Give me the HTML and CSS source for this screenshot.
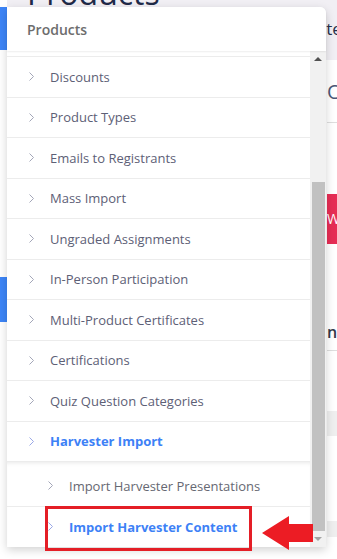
FILE: index.html
```html
<!DOCTYPE html>
<html lang="en">
<head>
<meta charset="utf-8">
<title>Products menu</title>
<link rel="stylesheet" href="styles.css">
</head>
<body>
<div class="bg">
  <div class="side">
    <div class="side-bar first"></div>
    <div class="side-bar second"></div>
  </div>
  <div class="main">
    <div class="main-head">
      <h1 class="title">Products</h1>
      <span class="head-right">ite</span>
    </div>
    <div class="main-body">
      <div class="bg-order">Order</div>
      <div class="bg-rule"></div>
      <div class="bg-btn">Wait</div>
      <div class="bg-strong">nt</div>
      <div class="bg-rule second"></div>
      <div class="bg-gray"></div>
      <div class="bg-gray second"></div>
    </div>
  </div>
</div>

<div class="panel">
  <div class="panel-head">Products</div>
  <div class="panel-body">
    <div class="list">
      <div class="list-top"></div>
      <div class="item"><svg class="chev" viewBox="0 0 5 9"><polyline points="0.5,0.5 4.5,4.5 0.5,8.5"/></svg><span>Discounts</span></div>
      <div class="item"><svg class="chev" viewBox="0 0 5 9"><polyline points="0.5,0.5 4.5,4.5 0.5,8.5"/></svg><span>Product Types</span></div>
      <div class="item"><svg class="chev" viewBox="0 0 5 9"><polyline points="0.5,0.5 4.5,4.5 0.5,8.5"/></svg><span>Emails to Registrants</span></div>
      <div class="item"><svg class="chev" viewBox="0 0 5 9"><polyline points="0.5,0.5 4.5,4.5 0.5,8.5"/></svg><span>Mass Import</span></div>
      <div class="item"><svg class="chev" viewBox="0 0 5 9"><polyline points="0.5,0.5 4.5,4.5 0.5,8.5"/></svg><span>Ungraded Assignments</span></div>
      <div class="item"><svg class="chev" viewBox="0 0 5 9"><polyline points="0.5,0.5 4.5,4.5 0.5,8.5"/></svg><span>In-Person Participation</span></div>
      <div class="item"><svg class="chev" viewBox="0 0 5 9"><polyline points="0.5,0.5 4.5,4.5 0.5,8.5"/></svg><span>Multi-Product Certificates</span></div>
      <div class="item"><svg class="chev" viewBox="0 0 5 9"><polyline points="0.5,0.5 4.5,4.5 0.5,8.5"/></svg><span>Certifications</span></div>
      <div class="item"><svg class="chev" viewBox="0 0 5 9"><polyline points="0.5,0.5 4.5,4.5 0.5,8.5"/></svg><span>Quiz Question Categories</span></div>
      <div class="item active"><svg class="chev" viewBox="0 0 5 9"><polyline points="0.5,0.5 4.5,4.5 0.5,8.5"/></svg><span>Harvester Import</span></div>
      <div class="sub">
        <div class="item sub-item"><svg class="chev" viewBox="0 0 5 9"><polyline points="0.5,0.5 4.5,4.5 0.5,8.5"/></svg><span>Import Harvester Presentations</span></div>
        <div class="item sub-item active last"><svg class="chev" viewBox="0 0 5 9"><polyline points="0.5,0.5 4.5,4.5 0.5,8.5"/></svg><span>Import Harvester Content</span></div>
      </div>
    </div>
    <div class="sb">
      <div class="sb-btn"><span class="tri up"></span></div>
      <div class="sb-track"><div class="sb-thumb"></div></div>
      <div class="sb-btn"><span class="tri down"></span></div>
    </div>
  </div>
</div>

<div class="highlight"></div>
<svg class="arrow" viewBox="0 0 51 34"><polygon points="0,17 27,0 27,8 51,8 51,26 27,26 27,34"/></svg>
</body>
</html>
```

FILE: styles.css
```css
* { box-sizing: border-box; }
html, body { margin: 0; padding: 0; }
body {
  width: 337px;
  height: 559px;
  overflow: hidden;
  background: #ffffff;
  font-family: "Open Sans", "Liberation Sans", sans-serif;
  position: relative;
}

/* background page */
.bg {
  display: grid;
  grid-template-columns: 7px 1fr;
  height: 559px;
}
.side { display: flex; flex-direction: column; }
.side-bar { background: #3d85f7; width: 7px; }
.side-bar.first { margin-top: 7px; height: 43px; }
.side-bar.second { margin-top: 227px; height: 45px; }

.main-head {
  height: 60px;
  background: #f1eff4;
  display: flex;
  align-items: flex-start;
  white-space: nowrap;
}
.title {
  margin: -23px 0 0 20px;
  width: 295px;
  font-size: 32px;
  line-height: 32px;
  font-weight: 400;
  color: #1f2a48;
}
.head-right {
  margin-top: 19px;
  font-size: 17px;
  line-height: 20px;
  color: #27304a;
}
.main-body {
  padding-left: 320px;
  display: flex;
  flex-direction: column;
  white-space: nowrap;
}
.bg-order {
  margin-top: 20px;
  font-size: 20px;
  line-height: 24px;
  color: #4c5877;
}
.bg-rule { margin-top: 18px; height: 1px; background: #dedede; }
.bg-rule.second { margin-top: 8px; }
.bg-btn {
  margin-top: 71px;
  height: 50px;
  background: #e62d55;
  color: #ffffff;
  font-size: 14px;
  line-height: 50px;
  padding-left: 0;
}
.bg-strong {
  margin-top: 78px;
  font-size: 16px;
  font-weight: 600;
  line-height: 20px;
  color: #333a4a;
}
.bg-gray { margin-top: 60px; height: 25px; background: #efefef; }
.bg-gray.second { margin-top: 85px; height: 16px; }

/* dropdown panel */
.panel {
  position: absolute;
  left: 7px;
  top: 7px;
  width: 319px;
  height: 540px;
  background: #ffffff;
  border-radius: 0 6px 0 0;
  box-shadow: 0 3px 10px rgba(0, 0, 0, 0.18);
  display: flex;
  flex-direction: column;
}
.panel-head {
  height: 44px;
  flex: 0 0 44px;
  padding-left: 20px;
  display: flex;
  align-items: center;
  font-size: 14px;
  font-weight: 600;
  color: #6d6d6d;
  box-shadow: 0 1px 2px rgba(0, 0, 0, 0.07);
  position: relative;
  z-index: 1;
  border-radius: 0 6px 0 0;
  background: #ffffff;
}
.panel-body {
  flex: 1;
  display: flex;
  min-height: 0;
}
.list {
  flex: 1;
  overflow: hidden;
}
.list-top { height: 6px; border-bottom: 1px solid #ececec; }
.item {
  height: 40.5px;
  border-bottom: 1px solid #ececec;
  display: flex;
  align-items: center;
  padding-left: 22px;
  font-size: 13px;
  color: #5d6076;
  white-space: nowrap;
}
.chev {
  width: 5px;
  height: 9px;
  margin-right: 16px;
  flex: 0 0 auto;
}
.chev polyline {
  fill: none;
  stroke: #a3a6b8;
  stroke-width: 1;
}
.item.active { color: #3d81f6; font-weight: 700; }
.item.active .chev polyline { stroke: #9aa8e6; }
.sub {
  padding-top: 4px;
  box-shadow: inset 0 4px 4px -3px rgba(0, 0, 0, 0.09);
}
.sub-item { padding-left: 41px; color: #666872; }
.item.last { border-bottom: none; }

/* scrollbar */
.sb {
  width: 16px;
  flex: 0 0 16px;
  background: #f1f1f1;
  display: flex;
  flex-direction: column;
}
.sb-btn {
  height: 16px;
  flex: 0 0 16px;
  display: flex;
  align-items: center;
  justify-content: center;
}
.tri { width: 0; height: 0; border-left: 4px solid transparent; border-right: 4px solid transparent; }
.tri.up { border-bottom: 4px solid #505050; }
.tri.down { border-top: 4px solid #a3a3a3; }
.sb-track {
  flex: 1;
  display: flex;
  flex-direction: column;
  justify-content: flex-end;
  padding: 0 1px 0 2px;
}
.sb-thumb { height: 349px; background: #c1c1c1; }

/* annotation */
.highlight {
  position: absolute;
  left: 45px;
  top: 506px;
  width: 207px;
  height: 45px;
  border: 3px solid #e41e26;
}
.arrow {
  position: absolute;
  left: 262px;
  top: 516px;
  width: 51px;
  height: 34px;
}
.arrow polygon { fill: #ec1c24; }
```
